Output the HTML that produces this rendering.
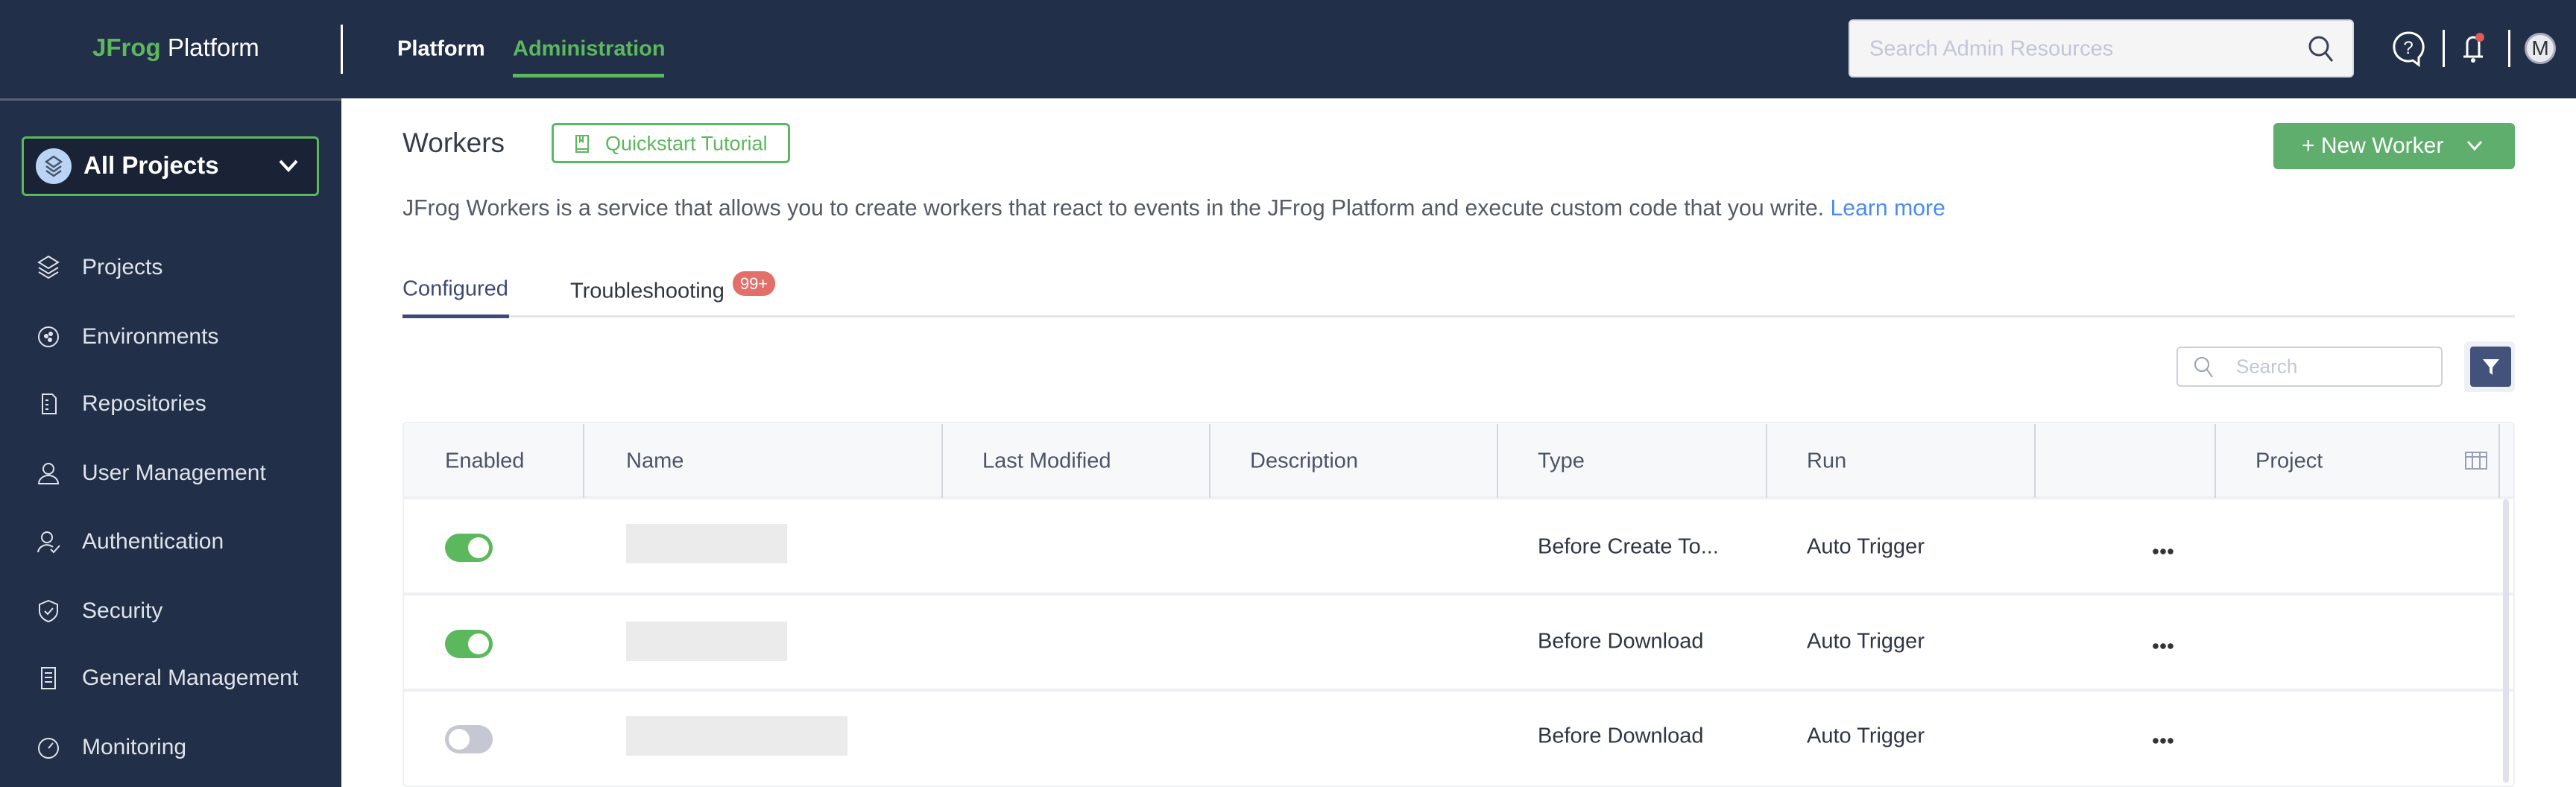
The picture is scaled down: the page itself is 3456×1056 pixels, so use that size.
<!DOCTYPE html>
<html><head><meta charset="utf-8"><style>
*{margin:0;padding:0;box-sizing:border-box}
body{width:3456px;height:1056px;overflow:hidden;background:#fff;font-family:"Liberation Sans",sans-serif;position:relative}
.a{position:absolute;white-space:nowrap}
.hdr{left:0;top:0;width:3456px;height:132px;background:#222f48}
.side{left:0;top:132px;width:458px;height:924px;background:#222f48;border-top:3px solid #5a6273}
.mi{left:110px;font-size:30px;color:#dfe3ea;transform:translateY(-50%)}
.ic{left:48px;width:34px;height:34px;transform:translateY(-50%)}
.th{font-size:29px;color:#4a5467;top:619px;transform:translateY(-50%)}
.vd{top:569px;width:2px;height:99px;background:#d2d6dd}
.td{font-size:29px;color:#2f3545;transform:translateY(-50%)}
.rl{left:542px;width:2830px;height:4px;background:#eef0f4}
.tg{left:597px;width:64px;height:38px;border-radius:19px;transform:translateY(-50%)}
.tg::after{content:"";position:absolute;top:5px;width:28px;height:28px;border-radius:50%;background:#fff}
.on{background:#5cb85c}.on::after{right:5px}
.off{background:#c5c7d3}.off::after{left:5px}
.gr{left:840px;height:53px;background:#ebebeb}
.dots{left:2887px;width:30px;height:8px;transform:translateY(-50%);background:radial-gradient(circle,#333 3.5px,transparent 4px) 0 0/10px 8px repeat-x}
</style></head><body>
<div class="a hdr"></div>
<div class="a" style="left:124px;top:64px;transform:translateY(-50%);font-size:33px;color:#fff"><span style="color:#5cb85c;font-weight:bold">JFrog</span> Platform</div>
<div class="a" style="left:457px;top:33px;width:3px;height:66px;background:#fff"></div>
<div class="a" style="left:533px;top:66px;transform:translateY(-50%);font-size:29px;color:#fff;font-weight:bold">Platform</div>
<div class="a" style="left:688px;top:66px;transform:translateY(-50%);font-size:29px;color:#5cb85c;font-weight:bold">Administration</div>
<div class="a" style="left:688px;top:99px;width:203px;height:5px;background:#5cb85c"></div>
<div class="a" style="left:2480px;top:26px;width:678px;height:78px;background:#f5f5f6;border-radius:6px;border:2px solid #d5d8e2"></div>
<div class="a" style="left:2508px;top:66px;transform:translateY(-50%);font-size:29px;color:#c2c6d6">Search Admin Resources</div>
<svg class="a" style="left:3095px;top:46px" width="40" height="40" viewBox="0 0 40 40"><circle cx="16" cy="16" r="12" fill="none" stroke="#3a4256" stroke-width="3"/><path d="M25 25 L34 36" stroke="#3a4256" stroke-width="3"/></svg>
<svg class="a" style="left:3208px;top:40px" width="46" height="52" viewBox="0 0 46 52"><path d="M23 4a19 19 0 1 0 6 37l8 6v-10a19 19 0 0 0-14-33z" fill="none" stroke="#fff" stroke-width="3"/><text x="23" y="32" font-size="24" fill="#fff" text-anchor="middle" font-family="Liberation Sans">?</text></svg>
<div class="a" style="left:3277px;top:40px;width:3px;height:50px;background:#fff"></div>
<svg class="a" style="left:3300px;top:38px" width="36" height="52" viewBox="0 0 36 52"><path d="M10 38 V20 a8 8 0 0 1 16 0 V38 M5 38 H31" fill="none" stroke="#fff" stroke-width="3"/><circle cx="18" cy="43" r="3" fill="#fff"/><circle cx="27" cy="12" r="6" fill="#e05a5a"/></svg>
<div class="a" style="left:3365px;top:40px;width:3px;height:50px;background:#fff"></div>
<div class="a" style="left:3387px;top:44px;width:42px;height:42px;border-radius:50%;background:#e8eaf0;border:3px solid #aab;font-size:28px;color:#333;text-align:center;line-height:36px">M</div>

<div class="a side"></div>
<div class="a" style="left:29px;top:183px;width:399px;height:80px;background:#1a2236;border:3px solid #5cb85c;border-radius:6px"></div>
<div class="a" style="left:48px;top:199px;width:48px;height:48px;border-radius:50%;background:#b9d4f5"></div>
<svg class="a" style="left:58px;top:208px" width="28" height="30" viewBox="0 0 28 30"><path d="M14 2 L24 9 L14 16 L4 9Z M4 15 L14 22 L24 15 M4 21 L14 28 L24 21" fill="none" stroke="#4a5467" stroke-width="2.5"/></svg>
<div class="a" style="left:112px;top:222px;transform:translateY(-50%);font-size:33px;color:#fff;font-weight:bold">All Projects</div>
<svg class="a" style="left:372px;top:210px" width="30" height="24" viewBox="0 0 30 24"><path d="M4 6 L15 18 L26 6" fill="none" stroke="#fff" stroke-width="4"/></svg>

<svg class="a ic" style="top:359px" viewBox="0 0 34 34"><path d="M17 2 L30 10 L17 18 L4 10Z M4 17 L17 25 L30 17 M4 23 L17 31 L30 23" fill="none" stroke="#dfe3ea" stroke-width="2"/></svg>
<div class="a mi" style="top:359px">Projects</div>
<svg class="a ic" style="top:452px" viewBox="0 0 34 34"><circle cx="17" cy="17" r="13" fill="none" stroke="#dfe3ea" stroke-width="2"/><circle cx="14" cy="16" r="3" fill="#dfe3ea"/><circle cx="20" cy="13" r="3" fill="#dfe3ea"/><circle cx="19" cy="21" r="3" fill="#dfe3ea"/></svg>
<div class="a mi" style="top:452px">Environments</div>
<svg class="a ic" style="top:542px" viewBox="0 0 34 34"><path d="M9 4 H22 L27 9 V30 H9Z M13 12 H17 M13 18 H17 M13 24 H17" fill="none" stroke="#dfe3ea" stroke-width="2"/></svg>
<div class="a mi" style="top:542px">Repositories</div>
<svg class="a ic" style="top:635px" viewBox="0 0 34 34"><circle cx="17" cy="11" r="7" fill="none" stroke="#dfe3ea" stroke-width="2"/><path d="M4 31 a13 11 0 0 1 26 0Z" fill="none" stroke="#dfe3ea" stroke-width="2"/></svg>
<div class="a mi" style="top:635px">User Management</div>
<svg class="a ic" style="top:727px" viewBox="0 0 34 34"><circle cx="15" cy="11" r="7" fill="none" stroke="#dfe3ea" stroke-width="2"/><path d="M3 31 a12 11 0 0 1 20 -7 M20 27 l4 4 l8 -9" fill="none" stroke="#dfe3ea" stroke-width="2"/></svg>
<div class="a mi" style="top:727px">Authentication</div>
<svg class="a ic" style="top:820px" viewBox="0 0 34 34"><path d="M17 3 L29 8 V17 C29 24 23 29 17 31 C11 29 5 24 5 17 V8Z M12 17 l4 4 l7 -8" fill="none" stroke="#dfe3ea" stroke-width="2"/></svg>
<div class="a mi" style="top:820px">Security</div>
<svg class="a ic" style="top:910px" viewBox="0 0 34 34"><path d="M8 3 H26 V31 H8Z M12 10 H22 M12 16 H22 M12 22 H22" fill="none" stroke="#dfe3ea" stroke-width="2"/></svg>
<div class="a mi" style="top:910px">General Management</div>
<svg class="a ic" style="top:1003px" viewBox="0 0 34 34"><circle cx="17" cy="18" r="13" fill="none" stroke="#dfe3ea" stroke-width="2"/><path d="M17 18 L23 11" stroke="#dfe3ea" stroke-width="2"/></svg>
<div class="a mi" style="top:1003px">Monitoring</div>

<div class="a" style="left:540px;top:192px;transform:translateY(-50%);font-size:37px;color:#353c4e">Workers</div>
<div class="a" style="left:740px;top:165px;width:320px;height:54px;border:3px solid #5cb85c;border-radius:6px"></div>
<svg class="a" style="left:770px;top:180px" width="22" height="26" viewBox="0 0 22 26"><path d="M3 2 H19 V24 H3Z M3 20 H19 M8 2 V10 L10 8 L12 10 V2" fill="none" stroke="#5cb85c" stroke-width="2"/></svg>
<div class="a" style="left:812px;top:193px;transform:translateY(-50%);font-size:27px;color:#5cb85c">Quickstart Tutorial</div>
<div class="a" style="left:3050px;top:165px;width:324px;height:62px;background:#5fae6d;border-radius:6px"></div>
<div class="a" style="left:3088px;top:196px;transform:translateY(-50%);font-size:30px;color:#fff">+&nbsp;New Worker</div>
<svg class="a" style="left:3308px;top:186px" width="24" height="18" viewBox="0 0 24 18"><path d="M3 4 L12 14 L21 4" fill="none" stroke="#fff" stroke-width="3"/></svg>
<div class="a" style="left:540px;top:280px;transform:translateY(-50%);font-size:30.2px;color:#555a66">JFrog Workers is a service that allows you to create workers that react to events in the JFrog Platform and execute custom code that you write. <span style="color:#4a8cf0">Learn more</span></div>

<div class="a" style="left:540px;top:388px;transform:translateY(-50%);font-size:29px;color:#3d4a73">Configured</div>
<div class="a" style="left:765px;top:391px;transform:translateY(-50%);font-size:29px;color:#2f3545">Troubleshooting</div>
<div class="a" style="left:983px;top:364px;width:57px;height:33px;background:#e36f6a;border-radius:16px;color:#fff;font-size:22px;text-align:center;line-height:33px">99+</div>
<div class="a" style="left:540px;top:423px;width:2834px;height:3px;background:#e3e5eb"></div>
<div class="a" style="left:540px;top:422px;width:143px;height:5px;background:#3d4a73"></div>

<div class="a" style="left:2920px;top:465px;width:357px;height:54px;border:2px solid #cdd0de;border-radius:6px"></div>
<svg class="a" style="left:2942px;top:477px" width="30" height="32" viewBox="0 0 30 32"><circle cx="12" cy="12" r="9" fill="none" stroke="#9aa0b4" stroke-width="2"/><path d="M19 19 L26 29" stroke="#9aa0b4" stroke-width="2"/></svg>
<div class="a" style="left:3000px;top:492px;transform:translateY(-50%);font-size:26px;color:#c2c6d6">Search</div>
<div class="a" style="left:3306px;top:458px;width:68px;height:68px;background:#eef0f6;border-radius:6px"></div>
<div class="a" style="left:3314px;top:465px;width:55px;height:54px;background:#42527a;border-radius:4px"></div>
<svg class="a" style="left:3328px;top:478px" width="28" height="28" viewBox="0 0 28 28"><path d="M3 4 H25 L16 15 V25 L12 22 V15Z" fill="#fff"/></svg>

<div class="a" style="left:540px;top:566px;width:2834px;height:490px;border:2px solid #eef0f4;border-radius:6px"></div>
<div class="a" style="left:542px;top:569px;width:2830px;height:99px;background:#f7f8fa"></div>
<div class="a rl" style="top:666px"></div>
<div class="a vd" style="left:782px"></div><div class="a vd" style="left:1263px"></div><div class="a vd" style="left:1622px"></div><div class="a vd" style="left:2008px"></div><div class="a vd" style="left:2369px"></div><div class="a vd" style="left:2729px"></div><div class="a vd" style="left:2971px"></div><div class="a vd" style="left:3352px"></div>
<div class="a th" style="left:597px">Enabled</div>
<div class="a th" style="left:840px">Name</div>
<div class="a th" style="left:1318px">Last Modified</div>
<div class="a th" style="left:1677px">Description</div>
<div class="a th" style="left:2063px">Type</div>
<div class="a th" style="left:2424px">Run</div>
<div class="a th" style="left:3026px">Project</div>
<svg class="a" style="left:3306px;top:605px" width="32" height="26" viewBox="0 0 32 26"><rect x="2" y="2" width="28" height="22" fill="none" stroke="#9aa0b4" stroke-width="2"/><path d="M2 8 H30 M11 2 V24 M21 2 V24" stroke="#9aa0b4" stroke-width="2"/></svg>

<div class="a tg on" style="top:735px"></div>
<div class="a gr" style="top:703px;width:216px"></div>
<div class="a td" style="left:2063px;top:734px">Before Create To...</div>
<div class="a td" style="left:2424px;top:734px">Auto Trigger</div>
<div class="a dots" style="top:740px"></div>
<div class="a rl" style="top:795px"></div>

<div class="a tg on" style="top:864px"></div>
<div class="a gr" style="top:834px;width:216px"></div>
<div class="a td" style="left:2063px;top:861px">Before Download</div>
<div class="a td" style="left:2424px;top:861px">Auto Trigger</div>
<div class="a dots" style="top:867px"></div>
<div class="a rl" style="top:924px"></div>

<div class="a tg off" style="top:992px"></div>
<div class="a gr" style="top:961px;width:297px"></div>
<div class="a td" style="left:2063px;top:988px">Before Download</div>
<div class="a td" style="left:2424px;top:988px">Auto Trigger</div>
<div class="a dots" style="top:994px"></div>

<div class="a" style="left:3358px;top:670px;width:8px;height:380px;background:#dfe2ea;border-radius:4px"></div>
</body></html>
